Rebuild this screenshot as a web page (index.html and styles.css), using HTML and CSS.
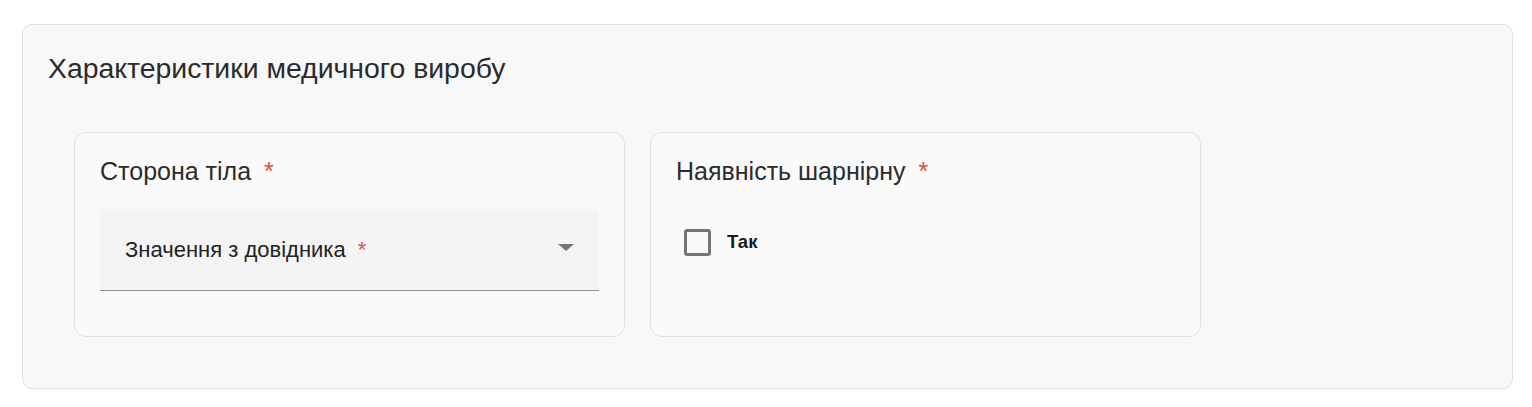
FILE: index.html
```html
<!DOCTYPE html>
<html lang="uk">
<head>
<meta charset="utf-8">
<link rel="stylesheet" href="styles.css">
</head>
<body>
<section class="panel">
  <h2 class="panel-title">Характеристики медичного виробу</h2>
  <div class="cards">
    <div class="card">
      <div class="card-label">Сторона тіла <span class="req">*</span></div>
      <div class="select">
        <span class="select-text">Значення з довідника <span class="req">*</span></span>
        <span class="arrow"></span>
      </div>
    </div>
    <div class="card">
      <div class="card-label">Наявність шарнірну <span class="req">*</span></div>
      <label class="check">
        <span class="box"></span>
        <span class="check-text">Так</span>
      </label>
    </div>
  </div>
</section>
</body>
</html>
```

FILE: styles.css
```css
html, body {
  margin: 0;
  padding: 0;
  background: #ffffff;
}
body {
  padding: 24px 19px 0 22px;
  font-family: "Liberation Sans", Arial, sans-serif;
  color: #2b2b2b;
}
.panel {
  background: #f8f8f8;
  border: 1px solid #e0e0e0;
  border-radius: 10px;
  height: 365px;
  box-sizing: border-box;
  padding: 27px 25px 0 25px;
}
.panel-title {
  margin: 0;
  font-size: 28.4px;
  font-weight: 400;
  line-height: 32px;
  color: #2b2b2b;
}
.cards {
  display: flex;
  gap: 25px;
  margin-top: 48px;
  padding-left: 26px;
}
.card {
  width: 551px;
  height: 205px;
  box-sizing: border-box;
  background: #fafafa;
  border: 1px solid #e0e0e0;
  border-radius: 12px;
  padding: 23px 25px 0 25px;
}
.card-label {
  font-size: 25px;
  line-height: 30px;
  color: #2b2b2b;
}
.req {
  color: #e0503a;
  margin-left: 6px;
}
.select {
  margin-top: 23px;
  height: 82px;
  box-sizing: border-box;
  background: #f4f4f4;
  border-radius: 4px 4px 0 0;
  border-bottom: 1px solid #8f8f8f;
  display: flex;
  align-items: center;
  justify-content: space-between;
  padding: 0 25px 0 25px;
}
.select-text {
  font-size: 22px;
  color: #222;
}
.arrow {
  width: 0;
  height: 0;
  border-left: 8px solid transparent;
  border-right: 8px solid transparent;
  border-top: 7px solid #757575;
  margin-top: -4px;
}
.check {
  display: flex;
  align-items: center;
  gap: 16px;
  margin-top: 43px;
  padding-left: 8px;
}
.box {
  width: 27px;
  height: 27px;
  box-sizing: border-box;
  border: 3px solid #757575;
  border-radius: 3px;
}
.check-text {
  font-size: 18.5px;
  font-weight: 700;
  color: #1a1a1a;
  margin-top: -2px;
}
```
